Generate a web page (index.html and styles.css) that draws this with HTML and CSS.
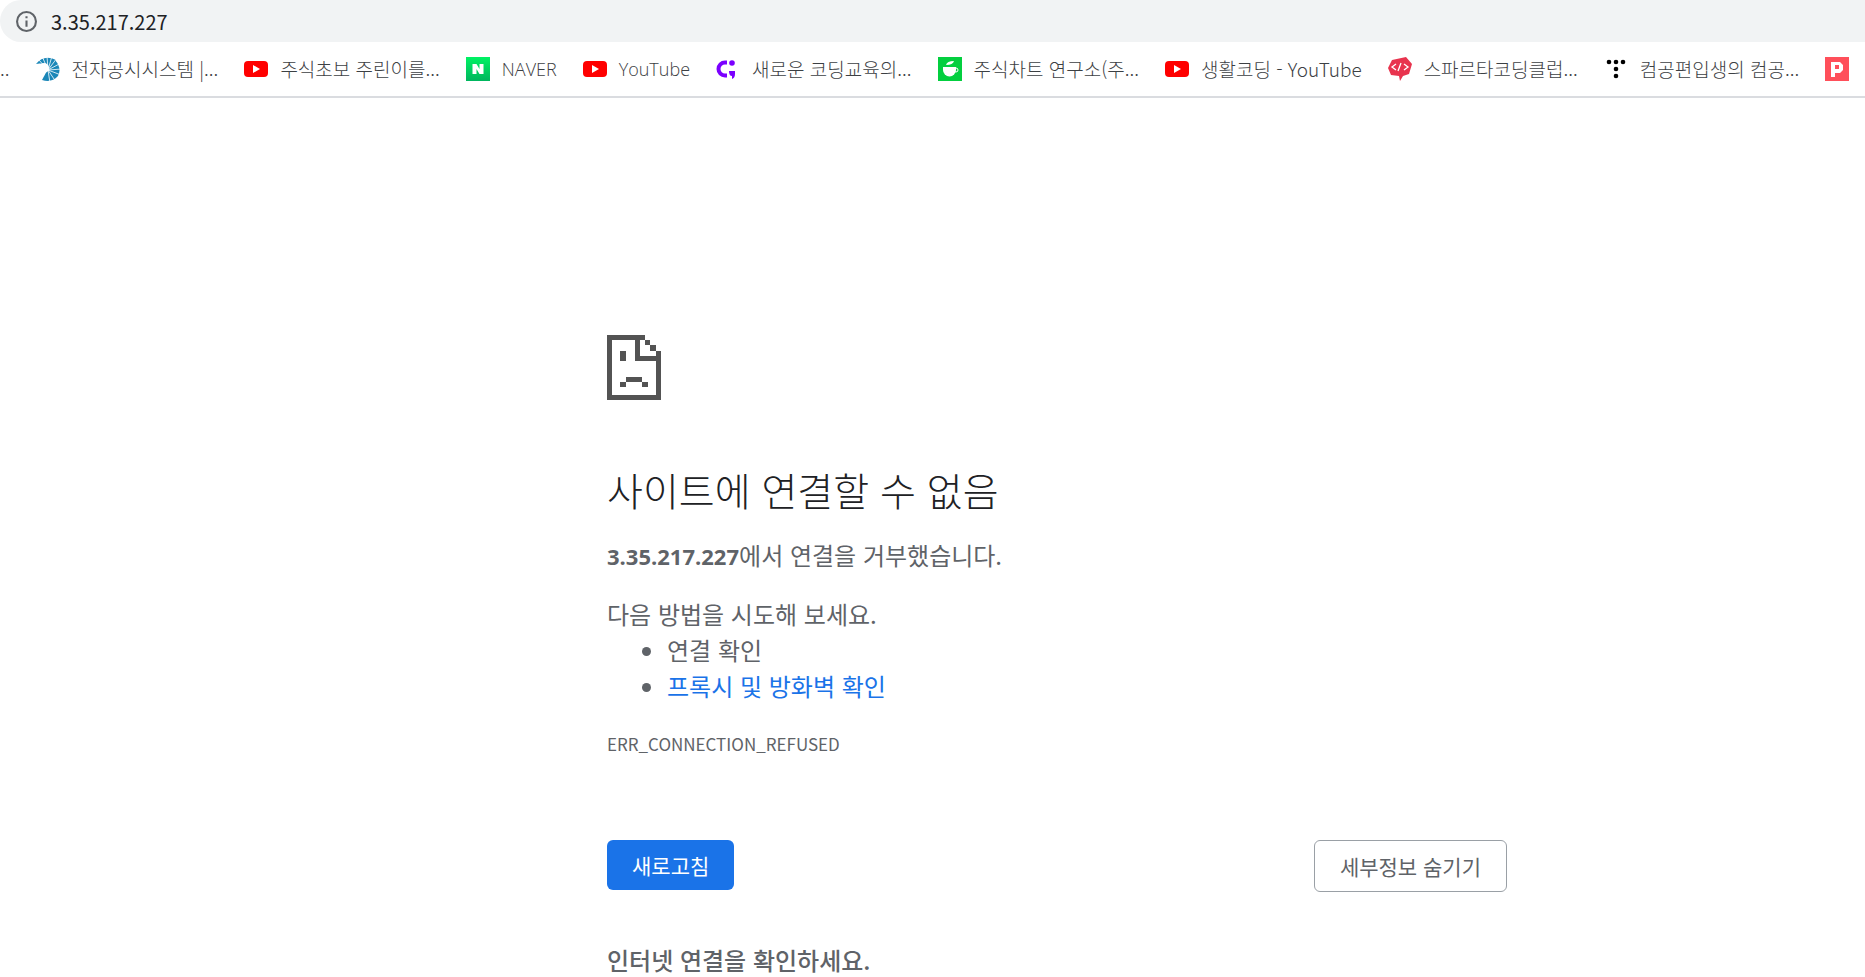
FILE: index.html
```html
<!DOCTYPE html>
<html lang="ko">
<head>
    <meta charset="UTF-8">
    <meta name="viewport" content="width=device-width, initial-scale=1.0">
    <title>3.35.217.227</title>
    <link rel="stylesheet" href="styles.css">
</head>
<body>

    <!-- 주소창 -->
    <header class="toolbar">
        <div class="address-bar">
            <svg class="info-icon" viewBox="0 0 20 20" aria-hidden="true">
                <circle cx="10" cy="10" r="9" fill="none" stroke="#5f6368" stroke-width="2"/>
                <path d="M9 9h2v6H9zM9 5h2v2H9z" fill="#5f6368"/>
            </svg>
            <input type="text" class="address" value="3.35.217.227" aria-label="주소창">
        </div>

        <!-- 북마크바 -->
        <nav class="bookmarks">
            <a href="#" class="bookmark">..</a>
            <a href="#" class="bookmark">
                <svg viewBox="0 0 24 24" aria-hidden="true">
                    <path d="M12 12 19 3Q26 11 22 19 16 26 6 23Z" fill="#1b87b8"/>
                    <path d="M0 7Q8-3 20 3L12 12Q9 5 0 7z" fill="#1b87b8"/>
                    <path d="M12 13 2 2M12 13 6-1M12 13 11-1M12 13 16-1M12 13 21 1M12 13 25 6M12 13 26 12M12 13 25 18M12 13 20 25M12 13 14 26" stroke="#fff" stroke-width=".8"/>
                    <circle cx="8" cy="11" r="5" fill="#fff"/>
                </svg>
                <span>전자공시시스템 |...</span>
            </a>
            <a href="#" class="bookmark">
                <svg viewBox="0 0 24 24" aria-hidden="true">
                    <rect y="4" width="24" height="16" rx="4" fill="#f00"/>
                    <path d="M9 8v8l7-4z" fill="#fff"/>
                </svg>
                <span>주식초보 주린이를...</span>
            </a>
            <a href="#" class="bookmark latin">
                <svg viewBox="0 0 24 24" aria-hidden="true">
                    <defs>
                        <linearGradient id="naver" x1="0" y1="0" x2="0" y2="1">
                            <stop offset="0" stop-color="#00f263"/>
                            <stop offset="1" stop-color="#00b55e"/>
                        </linearGradient>
                    </defs>
                    <rect width="24" height="24" fill="url(#naver)"/>
                    <path d="M6.500 7h4l3 5V7h4v10h-4l-3-5v5h-4z" fill="#fff"/>
                </svg>
                <span>NAVER</span>
            </a>
            <a href="#" class="bookmark latin">
                <svg viewBox="0 0 24 24" aria-hidden="true">
                    <rect y="4" width="24" height="16" rx="4" fill="#f00"/>
                    <path d="M9 8v8l7-4z" fill="#fff"/>
                </svg>
                <span>YouTube</span>
            </a>
            <a href="#" class="bookmark">
                <svg viewBox="0 0 24 24" aria-hidden="true">
                    <path d="M11 5.500h-2a6.500 6.500 0 0 0 0 13h2" fill="none" stroke="#7b00ff" stroke-width="4"/>
                    <circle cx="16" cy="6" r="2.800" fill="#7b00ff"/>
                    <path d="M13 14h6v3q0 4-3 5v-3q-3 0-3-5z" fill="#7b00ff"/>
                </svg>
                <span>새로운 코딩교육의...</span>
            </a>
            <a href="#" class="bookmark">
                <svg viewBox="0 0 24 24" aria-hidden="true">
                    <rect width="24" height="24" fill="#03cf3f"/>
                    <path d="M5 10h13v3a6 6 0 0 1-13 0z" fill="#fff"/>
                    <circle cx="18" cy="13" r="2" fill="none" stroke="#fff" stroke-width="1"/>
                    <path d="M8 8q1-4 8-4-1 4-8 4z" fill="#fff"/>
                </svg>
                <span>주식차트 연구소(주...</span>
            </a>
            <a href="#" class="bookmark">
                <svg viewBox="0 0 24 24" aria-hidden="true">
                    <rect y="4" width="24" height="16" rx="4" fill="#f00"/>
                    <path d="M9 8v8l7-4z" fill="#fff"/>
                </svg>
                <span>생활코딩 - YouTube</span>
            </a>
            <a href="#" class="bookmark">
                <svg viewBox="0 0 24 24" aria-hidden="true">
                    <path d="M4 3 18 0l6 7-3 10-6 2-3 5-1-5-8-1-3-7z" fill="#e8344e"/>
                    <path d="M8 7 4 10l4 3M16 7l4 3-4 3M13 6l-3 8" fill="none" stroke="#fff" stroke-width="1.300"/>
                </svg>
                <span>스파르타코딩클럽...</span>
            </a>
            <a href="#" class="bookmark">
                <svg viewBox="0 0 24 24" aria-hidden="true">
                    <circle cx="5" cy="5" r="2.300"/>
                    <circle cx="12" cy="5" r="2.300"/>
                    <circle cx="19" cy="5" r="2.300"/>
                    <circle cx="12" cy="12" r="2.300"/>
                    <circle cx="12" cy="19" r="2.300"/>
                </svg>
                <span>컴공편입생의 컴공...</span>
            </a>
            <a href="#" class="bookmark" aria-label="P">
                <svg viewBox="0 0 24 24" aria-hidden="true">
                    <rect width="24" height="24" fill="#ff4f5a"/>
                    <path d="M6 5h9l3 3v5l-3 3h-5v4H6z" fill="#fff"/>
                    <path d="M10 8h4v4h-4z" fill="#ff4f5a"/>
                </svg>
            </a>
        </nav>
    </header>

    <!-- 오류 내용 -->
    <main class="content">
        <div class="error-box">
            <svg class="error-icon" viewBox="0 0 54 65" aria-hidden="true">
                <path d="M0 0h38v5H33v16h16v-5h5v49H0zM5 5v55h44V26H28V5z" fill-rule="evenodd"/>
                <path d="M38 5h5v5h-5zM43 10h6v6h-6zM13 16h6v10h-6zM19 42h16v5H19zM13 47h6v5h-6zM35 47h6v5h-6z"/>
            </svg>
            <h1>사이트에 연결할 수 없음</h1>
            <p><strong>3.35.217.227</strong>에서 연결을 거부했습니다.</p>
            <div class="suggestions">
                <p>다음 방법을 시도해 보세요.</p>
                <ul>
                    <li>연결 확인</li>
                    <li><a href="#">프록시 및 방화벽 확인</a></li>
                </ul>
            </div>
            <div class="error-code">ERR_CONNECTION_REFUSED</div>
            <div class="buttons">
                <button type="button" class="reload">새로고침</button>
                <button type="button" class="details">세부정보 숨기기</button>
            </div>
            <h2>인터넷 연결을 확인하세요.</h2>
        </div>
    </main>

</body>
</html>
```
FILE: styles.css
```css
body {
    font-family: "Noto Sans CJK KR", sans-serif;
    margin: 0;
    background-color: #fff;
    color: #5f6368;
}

/* 주소창 */
.toolbar {
    border-bottom: 2px solid #dadce0;
}

.address-bar {
    display: flex;
    align-items: center;
    gap: 14px;
    height: 42px;
    padding-left: 16px;
    background-color: #f1f3f4;
    border-radius: 21px 0 0 21px;
}

.info-icon {
    width: 21px;
    height: 21px;
}

.address {
    flex: 1;
    padding: 0;
    border: none;
    outline: none;
    background: none;
    color: #202124;
    font-family: inherit;
    font-size: 20px;
}

/* 북마크바 */
.bookmarks {
    display: flex;
    height: 54px;
    overflow: hidden;
    gap: 26px;
}

.bookmark {
    display: flex;
    flex-shrink: 0;
    align-items: center;
    gap: 12px;
    color: #3c4043;
    font-size: 19px;
    font-weight: 300;
    line-height: 24px;
    text-decoration: none;
    white-space: nowrap;
}

.latin {
    font-family: "Open Sans", sans-serif;
    font-size: 18px;
}

.bookmark svg {
    width: 24px;
    height: 24px;
}

/* 오류 내용 */
.content {
    padding-left: 249px;
}

.error-box {
    max-width: 900px;
    margin: 0 auto;
    padding-top: 237px;
    font-size: 24px;
    line-height: 36px;
}

.error-icon {
    display: block;
    width: 54px;
    height: 65px;
    margin-bottom: 59px;
    fill: #535353;
}

h1 {
    margin: 0 0 18px;
    color: #202124;
    font-size: 39px;
    font-weight: 300;
    line-height: 60px;
}

p {
    margin: 0;
}

strong {
    font-family: "Open Sans", sans-serif;
    font-size: 22px;
}

.suggestions {
    margin-top: 22px;
}

.suggestions ul {
    margin: 0;
    padding-left: 60px;
}

.suggestions a {
    color: #1a73e8;
    text-decoration: none;
}

.error-code {
    margin-top: 22px;
    font-size: 17px;
}

.buttons {
    display: flex;
    justify-content: space-between;
    align-items: flex-start;
    margin-top: 78px;
}

.buttons button {
    padding: 12px 25px;
    border: none;
    border-radius: 6px;
    font-family: inherit;
    font-size: 21px;
    line-height: 26px;
    cursor: pointer;
}

.buttons .reload {
    background-color: #1a73e8;
    color: #fff;
}

.buttons .details {
    border: 1px solid #9aa0a6;
    background-color: #fff;
    color: #5f6368;
}

h2 {
    margin: 50px 0 0;
    font-size: 24px;
    font-weight: 500;
}
```
